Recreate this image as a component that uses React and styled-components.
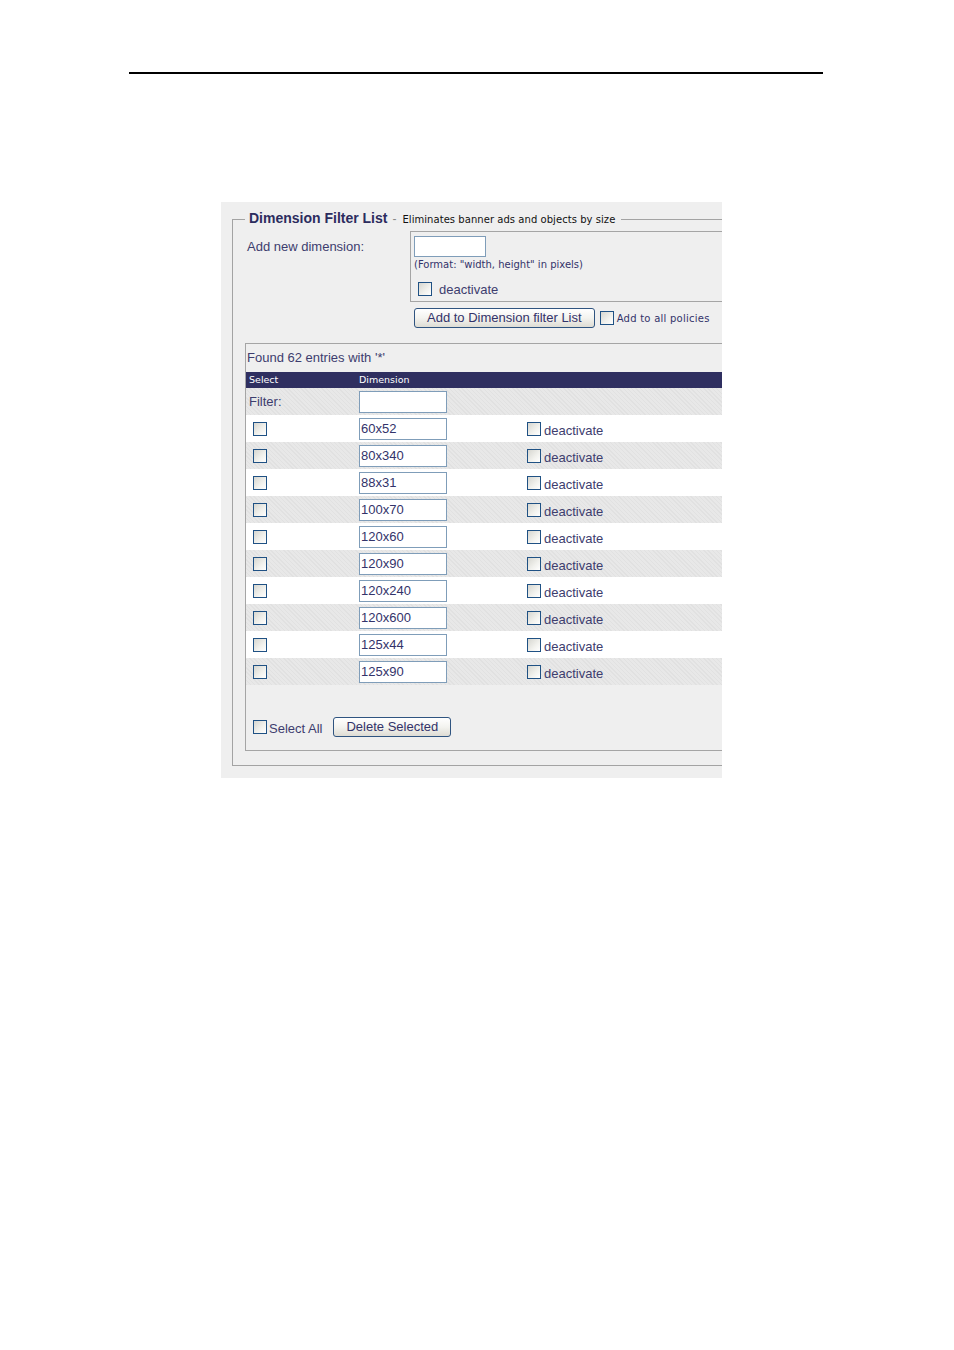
import React from 'react'
import styled, { createGlobalStyle, css } from 'styled-components'

const GlobalStyle = createGlobalStyle`
    body {
        margin: 0;
        background: #fff;
        font-family: "Liberation Sans", Arial, sans-serif;
    }
`

const Page = styled.div`
    padding-top: 72px;
`

const Rule = styled.div`
    margin-left: 129px;
    width: 694px;
    height: 2px;
    background: #000;
`

const Panel = styled.div`
    box-sizing: border-box;
    margin: 128px 0 0 221px;
    width: 501px;
    height: 576px;
    padding: 8px 0 0 11px;
    background: #efefef;
    overflow: hidden;
`

const Fieldset = styled.fieldset`
    box-sizing: border-box;
    width: 620px;
    min-width: 0;
    margin: 0;
    padding: 3px 0 14px 12px;
    border: 1px solid #a3a3a3;
`

const Legend = styled.legend`
    padding: 0 6px 0 4px;
    line-height: 16px;
    white-space: nowrap;
`

const Title = styled.span`
    font-size: 14px;
    font-weight: bold;
    color: #2c2c5e;
`

const Dash = styled.span`
    font-size: 12px;
    color: #888;
    margin: 0 6px 0 5px;
`

const Sub = styled.span`
    font-family: "DejaVu Sans", Verdana, sans-serif;
    font-size: 10px;
    letter-spacing: 0.05px;
    color: #111;
`

const AddSection = styled.div`
    display: grid;
    grid-template-columns: 165px 1fr;
`

const Label = styled.div`
    padding: 8px 0 0 2px;
    font-size: 13px;
    line-height: 15px;
    color: #3d3d6e;
`

const AddBox = styled.div`
    border: 1px solid #a5a5a5;
    border-right: none;
    padding: 4px 0 4px 3px;
`

const TextInput = styled.input`
    box-sizing: border-box;
    display: block;
    width: ${p => p.$w || 88}px;
    height: ${p => p.$h || 22}px;
    margin: 0;
    padding: 0 1px;
    border: 1px solid #7f9db9;
    background: #fff;
    font-family: "Liberation Sans", Arial, sans-serif;
    font-size: 13px;
    color: #33336a;
    outline: none;
`

const Hint = styled.div`
    margin-top: 2px;
    font-family: "DejaVu Sans", Verdana, sans-serif;
    font-size: 10px;
    line-height: 12px;
    color: #33336a;
`

const Check = styled.input.attrs({ type: 'checkbox' })`
    appearance: none;
    box-sizing: border-box;
    flex: none;
    width: 14px;
    height: 14px;
    margin: 0;
    border: 1px solid #1f5184;
    background: linear-gradient(135deg, #d6d6d0 0%, #f2f2ee 60%, #fff 100%);
`

const CheckLabel = styled.label`
    display: flex;
    align-items: center;
    gap: ${p => p.$gap || 3}px;
    margin-left: ${p => p.$ml || 0}px;
    margin-top: ${p => p.$mt || 0}px;
    font-size: 13px;
    line-height: 15px;
    color: #3d3d6e;
`

const CheckText = styled.span`
    padding-top: ${p => p.$pt || 0}px;
`

const SmallText = styled.span`
    font-family: "DejaVu Sans", Verdana, sans-serif;
    font-size: 10px;
    letter-spacing: 0.25px;
    color: #33336a;
`

const ButtonRow = styled.div`
    grid-column: 2;
    display: flex;
    align-items: center;
    margin-top: 6px;
    padding-left: 4px;
`

const Button = styled.button`
    box-sizing: border-box;
    height: 20px;
    margin: 0 ${p => p.$mr || 0}px 0 ${p => p.$ml || 0}px;
    padding: 0 12px;
    border: 1px solid #2f5480;
    border-radius: 3px;
    background: linear-gradient(#ffffff, #f3f3ef 50%, #dedcd4);
    font-family: "Liberation Sans", Arial, sans-serif;
    font-size: 13px;
    line-height: 16px;
    color: #33336a;
`

const TableBox = styled.div`
    margin-top: 15px;
    border: 1px solid #a5a5a5;
    border-right: none;
    padding-top: 6px;
`

const Found = styled.div`
    padding-left: 1px;
    font-size: 13px;
    line-height: 15px;
    color: #3d3d6e;
`

const Grid = styled.div`
    display: grid;
    grid-template-columns: 111px 170px 1fr;
    align-items: center;
`

const Head = styled(Grid)`
    margin-top: 7px;
    height: 16px;
    background: #2f2f60;
    font-family: "DejaVu Sans", Verdana, sans-serif;
    font-size: 9.5px;
    line-height: 16px;
    color: #fff;
`

const Cell = styled.div`
    display: flex;
    align-items: center;
    padding-left: ${p => p.$pl || 0}px;
`

const Row = styled(Grid)`
    height: 27px;
    font-size: 13px;
    color: #3d3d6e;
    ${p => p.$shade ? css`
        background: repeating-linear-gradient(45deg, #e1e1e1 0 1px, #e8e8e8 1px 3px);
    ` : css`
        background: #fff;
    `}
`

const Footer = styled.div`
    display: flex;
    align-items: center;
    padding: 32px 0 13px 7px;
`

const sizes = ['60x52', '80x340', '88x31', '100x70', '120x60', '120x90', '120x240', '120x600', '125x44', '125x90']

const App = () => {
    return (
        <Page>
            <GlobalStyle />
            <Rule />
            <Panel>
                <Fieldset>
                    <Legend>
                        <Title>Dimension Filter List</Title>
                        <Dash>-</Dash>
                        <Sub>Eliminates banner ads and objects by size</Sub>
                    </Legend>

                    <AddSection>
                        <Label>Add new dimension:</Label>
                        <AddBox>
                            <TextInput $w={72} $h={21} />
                            <Hint>(Format: "width, height" in pixels)</Hint>
                            <CheckLabel $gap={7} $ml={4} $mt={9}>
                                <Check />
                                <CheckText $pt={2}>deactivate</CheckText>
                            </CheckLabel>
                        </AddBox>
                        <ButtonRow>
                            <Button $mr={5}>Add to Dimension filter List</Button>
                            <CheckLabel $gap={3}>
                                <Check />
                                <SmallText>Add to all policies</SmallText>
                            </CheckLabel>
                        </ButtonRow>
                    </AddSection>

                    <TableBox>
                        <Found>Found 62 entries with '*'</Found>
                        <Head>
                            <Cell $pl={3}>Select</Cell>
                            <Cell $pl={2}>Dimension</Cell>
                            <Cell />
                        </Head>
                        <Row $shade>
                            <Cell $pl={3}>Filter:</Cell>
                            <Cell $pl={2}><TextInput /></Cell>
                            <Cell />
                        </Row>
                        {sizes.map((s, i) => (
                            <Row key={s} $shade={i % 2 === 1}>
                                <Cell $pl={7}><Check /></Cell>
                                <Cell $pl={2}><TextInput defaultValue={s} /></Cell>
                                <Cell>
                                    <CheckLabel $gap={3}>
                                        <Check />
                                        <CheckText $pt={3}>deactivate</CheckText>
                                    </CheckLabel>
                                </Cell>
                            </Row>
                        ))}
                        <Footer>
                            <CheckLabel $gap={2}>
                                <Check />
                                <CheckText $pt={2}>Select All</CheckText>
                            </CheckLabel>
                            <Button $ml={11}>Delete Selected</Button>
                        </Footer>
                    </TableBox>
                </Fieldset>
            </Panel>
        </Page>
    )
}

export default App
